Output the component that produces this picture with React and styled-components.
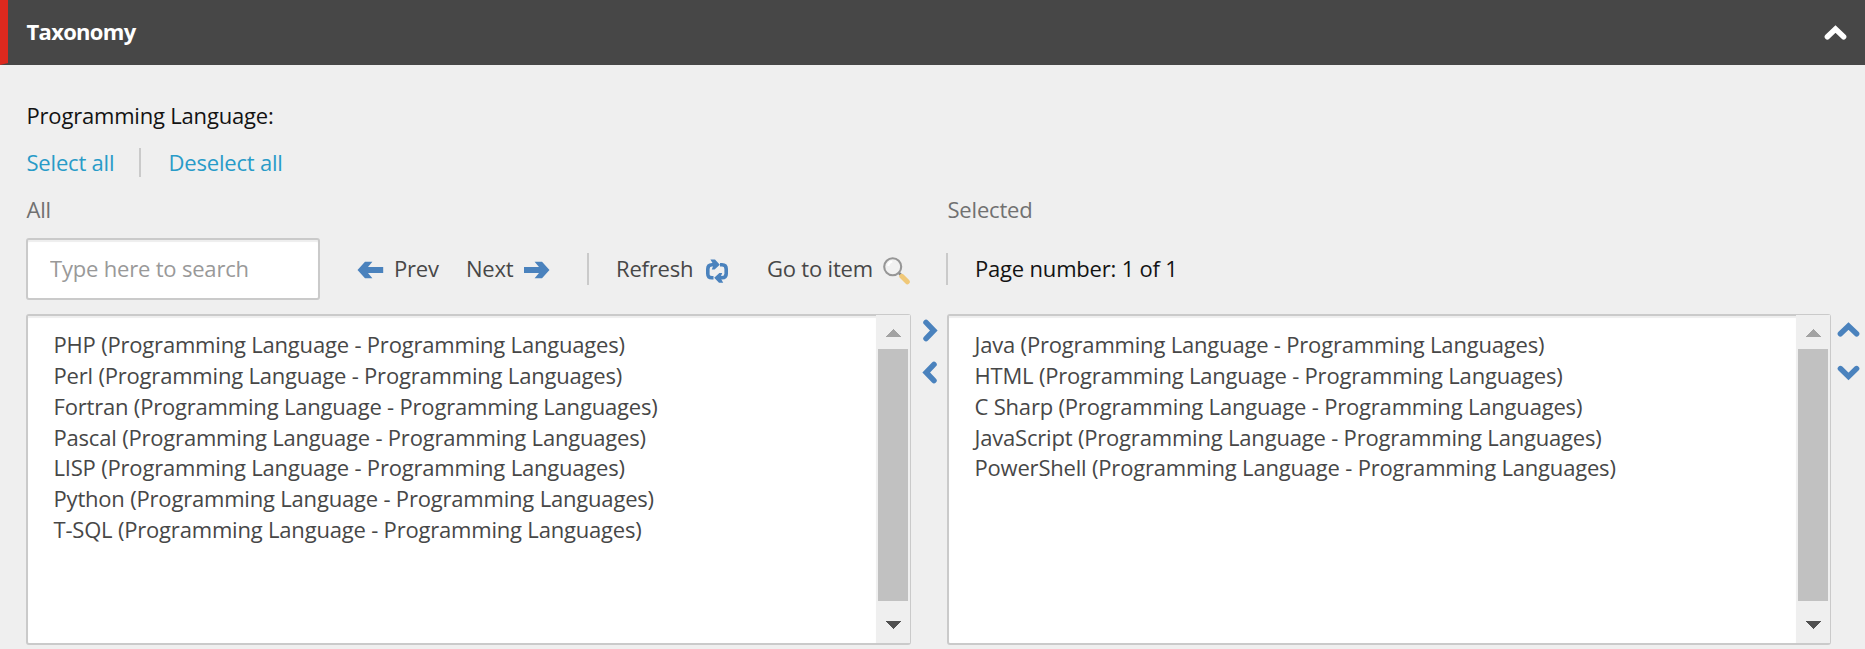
import React from "react";
import styled, { createGlobalStyle } from "styled-components";

const Global = createGlobalStyle`
  * { box-sizing: border-box; }
  html, body { margin: 0; padding: 0; background: #efefef; }
  body { overflow: hidden; }
  body, button, input {
    font-family: "Open Sans", sans-serif;
    font-size: 22px;
    font-weight: 400;
    letter-spacing: -0.19px;
  }
`;

const Panel = styled.section`
  width: 1865px;
  height: 649px;
  background: #efefef;
  color: #131313;
`;

const Header = styled.header`
  display: flex;
  justify-content: space-between;
  height: 65px;
  padding: 0 18px 0 18.5px;
  background: #474747;
  border-left: 8px solid #dc291e;
  border-bottom: 2px solid #474747;
`;

const Title = styled.h2`
  margin: 0;
  font-size: 22px;
  font-weight: 700;
  line-height: 63px;
  letter-spacing: -0.7px;
  color: #fff;
`;

const Collapse = styled.button`
  width: 23px;
  height: 17px;
  margin: 24px 0 0;
  padding: 0;
  border: 0;
  background: none;
  svg { display: block; }
`;

const Body = styled.div`
  padding: 27px 0 0 26px;
`;

const FieldLabel = styled.div`
  height: 47px;
  padding-left: 0.5px;
  line-height: 47px;
`;

const Actions = styled.div`
  display: flex;
  align-items: center;
  height: 47px;
`;

const Link = styled.a`
  width: ${(p) => p.$width}px;
  padding-left: 0.5px;
  line-height: 47px;
  color: #289bc8;
  white-space: nowrap;
`;

const Divider = styled.span`
  flex: none;
  width: 2px;
  height: ${(p) => p.$height}px;
  margin-right: ${(p) => p.$after}px;
  background: #cacaca;
`;

const Captions = styled.div`
  display: grid;
  grid-template-columns: 921px 1fr;
  height: 52px;
  padding-left: 0.5px;
  line-height: 47px;
  color: #717171;
`;

const Toolbar = styled.div`
  display: flex;
  align-items: center;
  height: 62px;
  margin-bottom: 14px;
`;

const Search = styled.input`
  width: 294px;
  height: 62px;
  margin: 0 37px 0 0;
  padding: 0 22px 2px;
  border: 2px solid #cacaca;
  border-radius: 3px;
  outline: 0;
  background: #fff;
  box-shadow: inset 0 2px 1px #eee;
  &::placeholder { color: #999; opacity: 1; }
`;

const Tool = styled.button`
  display: flex;
  align-items: center;
  flex: none;
  width: ${(p) => p.$width}px;
  height: 62px;
  padding: 0;
  border: 0;
  background: none;
  color: #474747;
  text-align: left;
  white-space: nowrap;
  svg { flex: none; margin-top: ${(p) => p.$drop || 2}px; }
`;

const ToolLabel = styled.span`
  width: ${(p) => p.$width}px;
  margin-left: ${(p) => p.$before || 0}px;
  padding-bottom: 2px;
`;

const PageInfo = styled.span`
  padding-bottom: 2px;
`;

const Lists = styled.div`
  display: flex;
  align-items: flex-start;
`;

const ListBox = styled.div`
  display: flex;
  width: ${(p) => p.$width}px;
  height: 331px;
  border: 2px solid #cacaca;
  border-right-width: 1px;
  border-radius: 3px;
  background: #fff;
`;

const Options = styled.ul`
  flex: 1;
  margin: 0;
  padding: 12px 0 0 25.5px;
  list-style: none;
  color: #474747;
  box-shadow: inset 0 2px 1px #eee;
`;

const Option = styled.li`
  height: 30.85px;
  line-height: 32px;
  white-space: nowrap;
`;

const Scrollbar = styled.div`
  display: flex;
  flex-direction: column;
  align-items: center;
  justify-content: space-between;
  width: 34px;
  height: 328px;
  margin-top: -1px;
  padding: 14px 0;
  background: #efefef;
`;

const Thumb = styled.div`
  width: 30px;
  height: 252px;
  margin-bottom: 8px;
  background: #c1c1c1;
`;

const Movers = styled.div`
  display: flex;
  flex-direction: column;
  align-items: center;
  gap: ${(p) => p.$gap}px;
  width: ${(p) => p.$width}px;
  padding-top: ${(p) => p.$top}px;
  padding-left: 1px;
`;

const Mover = styled.button`
  padding: 0;
  border: 0;
  background: none;
  svg { display: block; }
`;

const BLUE = "#4a82bd";

const shapes = {
  up: { w: 23, h: 16, points: "3.4,11.8 11.5,4 19.6,11.8" },
  down: { w: 23, h: 16, points: "3.4,3.6 11.5,11.4 19.6,3.6" },
  right: { w: 16, h: 23, points: "4,3.4 11.8,11.5 4,19.6" },
  left: { w: 16, h: 23, points: "12,3.4 4.2,11.5 12,19.6" },
};

function Chevron({ dir, color = BLUE }) {
  const s = shapes[dir];
  return (
    <svg width={s.w} height={s.h} viewBox={`0 0 ${s.w} ${s.h}`} fill="none">
      <polyline points={s.points} stroke={color} strokeWidth="5.5" strokeLinecap="round" />
    </svg>
  );
}

function Arrow({ next }) {
  return (
    <svg width="27" height="18" viewBox="0 0 27 18">
      <path
        transform={next ? "translate(26 0) scale(-1 1)" : undefined}
        fill={BLUE}
        d="M.5 9 8 .7h7.4L11 6h15.2v6H11l4.4 5.3H8Z"
      />
    </svg>
  );
}

function RefreshIcon() {
  return (
    <svg width="24" height="26" viewBox="0 0 24 26">
      <g fill="none" stroke={BLUE} strokeWidth="3.6">
        <path d="M8.5 19.8H7C4 19.8 2.8 18.6 2.8 15.8V11C2.8 8 4.2 6.8 7 6.8h4" />
        <path d="M15 6.8h2c3 0 4.2 1.4 4.2 4.2v4.8c0 2.8-1.4 4-4.2 4h-4" />
      </g>
      <path fill={BLUE} d="M5.4 1.6H10L14.8 6.8 9.6 11.6H6.8L8.6 6.8Z" />
      <path fill={BLUE} d="M18.2 24.8H14L9.2 19.8 14.4 15h2.8L15.4 19.8Z" />
    </svg>
  );
}

function Magnifier() {
  return (
    <svg width="28" height="29" viewBox="0 0 28 29">
      <path d="M16 17l3 3" stroke="#858585" strokeWidth="2.5" />
      <path d="M18.8 20.3l5.5 5.5" stroke="#f0c878" strokeWidth="5" strokeLinecap="round" />
      <circle cx="9.7" cy="10.7" r="8.5" fill="#f1f1f1" stroke="#969696" strokeWidth="2.1" />
      <path d="M5.3 10a5 5 0 0 1 4-4.5" fill="none" stroke="#fff" strokeWidth="2" />
    </svg>
  );
}

function Triangle({ down }) {
  return (
    <svg width="16" height="8" viewBox="0 0 16 8" shapeRendering="crispEdges">
      <path fill={down ? "#505050" : "#a3a3a3"} d={down ? "M0 0h16L8 8Z" : "M0 8h16L8 0Z"} />
    </svg>
  );
}

function SelectList({ items, width }) {
  return (
    <ListBox $width={width}>
      <Options>
        {items.map((name) => (
          <Option key={name}>{name} (Programming Language - Programming Languages)</Option>
        ))}
      </Options>
      <Scrollbar>
        <Triangle />
        <Thumb />
        <Triangle down />
      </Scrollbar>
    </ListBox>
  );
}

const available = ["PHP", "Perl", "Fortran", "Pascal", "LISP", "Python", "T-SQL"];
const selected = ["Java", "HTML", "C Sharp", "JavaScript", "PowerShell"];

export default function App() {
  return (
    <>
      <Global />
      <Panel>
        <Header>
          <Title>Taxonomy</Title>
          <Collapse aria-label="Collapse"><Chevron dir="up" color="#fff" /></Collapse>
        </Header>
        <Body>
          <FieldLabel>Programming Language:</FieldLabel>
          <Actions>
            <Link $width={113}>Select all</Link>
            <Divider $height={29} $after={27} />
            <Link>Deselect all</Link>
          </Actions>
          <Captions>
            <span>All</span>
            <span>Selected</span>
          </Captions>
          <Toolbar>
            <Search placeholder="Type here to search" />
            <Tool $width={109}>
              <Arrow />
              <ToolLabel $before={10} $width={60}>Prev</ToolLabel>
            </Tool>
            <Tool $width={121}>
              <ToolLabel $width={58}>Next</ToolLabel>
              <Arrow next />
            </Tool>
            <Divider $height={32} $after={27} />
            <Tool $width={151} $drop={3}>
              <ToolLabel $width={89}>Refresh</ToolLabel>
              <RefreshIcon />
            </Tool>
            <Tool $width={179} $drop={3}>
              <ToolLabel $width={116}>Go to item</ToolLabel>
              <Magnifier />
            </Tool>
            <Divider $height={32} $after={27} />
            <PageInfo>Page number: 1 of 1</PageInfo>
          </Toolbar>
          <Lists>
            <SelectList items={available} width={885} />
            <Movers $width={36} $top={5} $gap={19}>
              <Mover aria-label="Add"><Chevron dir="right" /></Mover>
              <Mover aria-label="Remove"><Chevron dir="left" /></Mover>
            </Movers>
            <SelectList items={selected} width={884} />
            <Movers $width={34} $top={8} $gap={27}>
              <Mover aria-label="Move up"><Chevron dir="up" /></Mover>
              <Mover aria-label="Move down"><Chevron dir="down" /></Mover>
            </Movers>
          </Lists>
        </Body>
      </Panel>
    </>
  );
}
